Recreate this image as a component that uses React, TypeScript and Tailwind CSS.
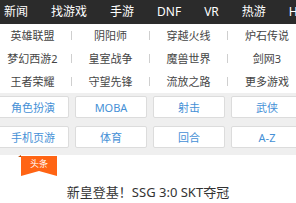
import React from 'react';

const navItems = ['新闻', '找游戏', '手游', 'DNF', 'VR', '热游', 'H5'];

const hotGames = [
    '英雄联盟', '阴阳师', '穿越火线', '炉石传说',
    '梦幻西游2', '皇室战争', '魔兽世界', '剑网3',
    '王者荣耀', '守望先锋', '流放之路', '更多游戏',
];

const categories = ['角色扮演', 'MOBA', '射击', '武侠', '手机页游', '体育', '回合', 'A-Z'];

export default function App() {
    return (
        <div
            className="w-[296px] h-[203px] overflow-hidden bg-white"
            style={{ fontFamily: '"Noto Sans", "Noto Sans CJK SC", sans-serif' }}
        >
            {/* top channel bar, scrolls sideways on the real page */}
            <nav className="h-[24px] bg-[#2b2b2b] flex items-center gap-[23px] pl-[4px] whitespace-nowrap overflow-hidden">
                {navItems.map((label) => (
                    <span key={label} className="shrink-0 text-[12px] text-white leading-none">{label}</span>
                ))}
            </nav>

            {/* hot games grid */}
            <div className="bg-white ml-[-6px] grid grid-cols-[repeat(4,78px)]">
                {hotGames.map((name, i) => (
                    <div key={name} className="h-[23px] flex items-center">
                        <span className="flex-1 text-center text-[11px] text-[#444] leading-none">{name}</span>
                        {i % 4 !== 3 && <div className="w-px h-[9px] bg-[#cfcfcf]"></div>}
                    </div>
                ))}
            </div>

            {/* category buttons */}
            <div className="bg-[#efefef] pt-[3px] pb-[7px]">
                <div className="ml-[-3px] grid grid-cols-[repeat(4,72px)] gap-x-[6px] gap-y-[8px]">
                    {categories.map((c) => (
                        <div
                            key={c}
                            className="h-[22px] bg-white border border-[#dcdcdc] rounded-[2px] flex items-center justify-center text-[11px] text-[#4590d6] leading-none"
                        >
                            {c}
                        </div>
                    ))}
                </div>
            </div>

            {/* headline */}
            <div className="bg-white pt-[1px]">
                <div className="ml-[21px] relative w-[36px] h-[20px]">
                    <div className="absolute left-[-3px] top-[-1px] w-0 h-0 border-l-[3px] border-l-transparent border-b-[2px] border-b-[#b84a00]"></div>
                    <svg width="36" height="20" viewBox="0 0 36 20" className="block">
                        <polygon points="0,0 36,0 36,20 18,15 0,20" fill="#ff6414" />
                    </svg>
                    <span className="absolute inset-x-0 top-[3px] text-center text-[9px] text-white leading-none">头条</span>
                </div>
                <p className="mt-[10px] text-center text-[13px] text-[#333] leading-none">新皇登基！SSG 3:0 SKT夺冠</p>
            </div>
        </div>
    );
}
